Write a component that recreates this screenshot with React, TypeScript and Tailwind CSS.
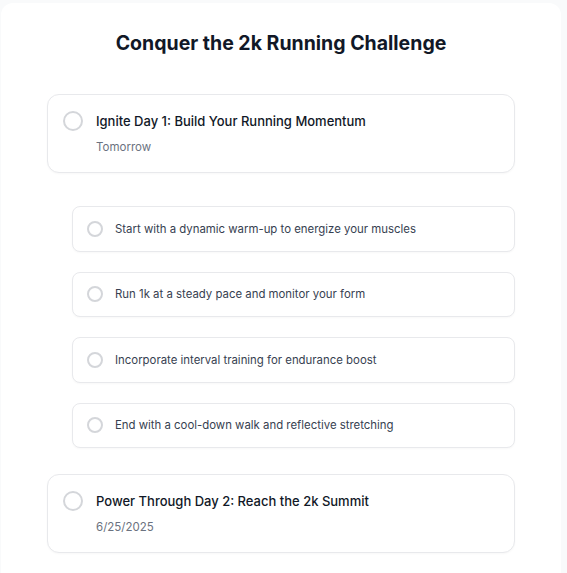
const subtasks = [
  "Start with a dynamic warm-up to energize your muscles",
  "Run 1k at a steady pace and monitor your form",
  "Incorporate interval training for endurance boost",
  "End with a cool-down walk and reflective stretching",
];

const DayCard = ({ title, date }: { title: string; date: string }) => {
  return (
    <div className="flex gap-[13px] border border-[#e8e9ec] rounded-xl bg-white pl-[15px] pr-4 pt-4 pb-[15px] shadow-[0_1px_2px_rgba(0,0,0,0.03)]">
      <div className="w-5 h-5 shrink-0 rounded-full border-2 border-[#d4d6da]"></div>
      <div className="flex flex-col gap-[6px]">
        <div className="text-[13px] leading-5 font-medium text-[#111827]">{title}</div>
        <div className="text-[11.5px] leading-5 text-[#6b7280]">{date}</div>
      </div>
    </div>
  );
};

const SubTask = ({ text }: { text: string }) => {
  return (
    <div className="flex items-center gap-3 h-[45.5px] border border-[#e8e9ec] rounded-lg bg-white pl-[14px] pr-4 shadow-[0_1px_2px_rgba(0,0,0,0.03)]">
      <div className="w-4 h-4 shrink-0 rounded-full border-2 border-[#d4d6da]"></div>
      <div className="text-[11.4px] leading-5 text-[#374151]">{text}</div>
    </div>
  );
};

export default function App() {
  return (
    <div className="min-h-screen bg-[#f9fafb] pt-[3px] pl-[1px] font-['Inter',sans-serif]">
      <div className="w-[560px] min-h-[600px] bg-white rounded-xl px-[46px] pt-[26px] pb-8">
        <h1 className="text-[19.5px] leading-7 font-bold text-center text-[#111827]">
          Conquer the 2k Running Challenge
        </h1>
        <div className="mt-[37px]">
          <DayCard title="Ignite Day 1: Build Your Running Momentum" date="Tomorrow" />
        </div>
        <div className="ml-[25px] mt-[33px] flex flex-col gap-5">
          {subtasks.map((t) => (
            <SubTask key={t} text={t} />
          ))}
        </div>
        <div className="mt-[26px]">
          <DayCard title="Power Through Day 2: Reach the 2k Summit" date="6/25/2025" />
        </div>
      </div>
    </div>
  );
}
